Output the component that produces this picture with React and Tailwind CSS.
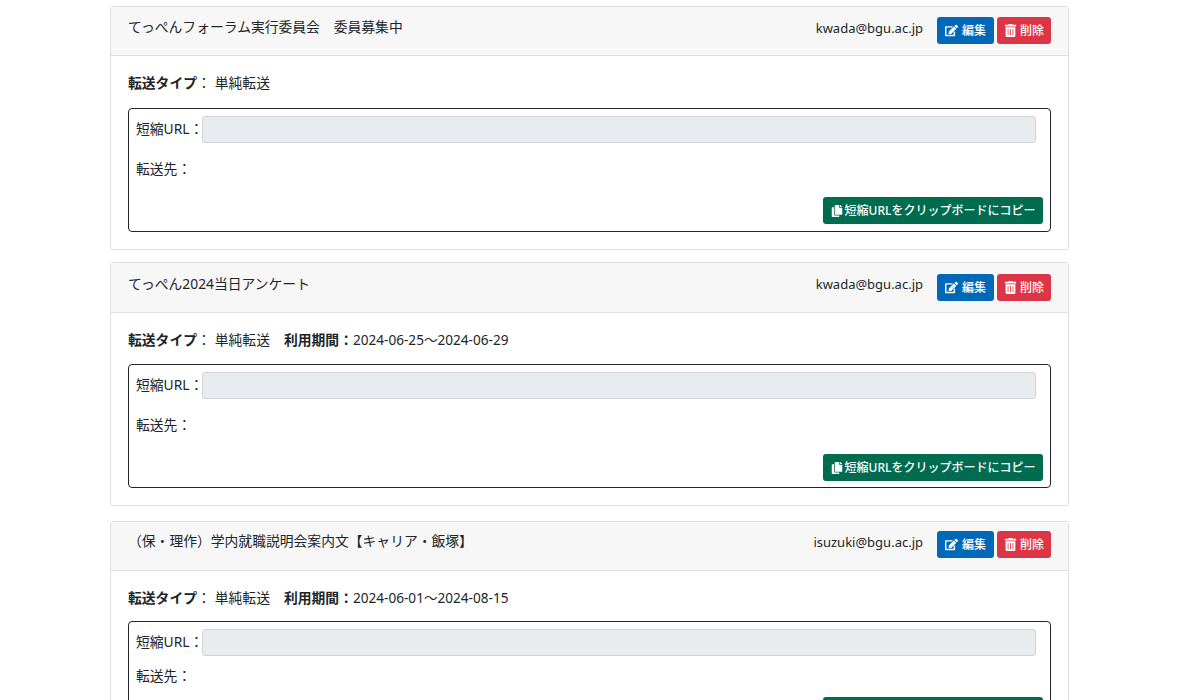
import React from "react";
import { FaEdit, FaTrashAlt, FaCopy } from "react-icons/fa";

const cards = [
  {
    title: "てっぺんフォーラム実行委員会　委員募集中",
    email: "kwada@bgu.ac.jp",
    period: null,
    headerH: "h-[49px]",
    titlePt: "pt-[10px]",
    emailPt: "pt-[11px]",
    btnMt: "mt-[10px]",
    typeH: "h-[52px] pt-[3px]",
    destH: "h-[54px] pb-[2px]",
    boxPb: "pb-[7px]",
    mb: "mb-[12px]",
  },
  {
    title: "てっぺん2024当日アンケート",
    email: "kwada@bgu.ac.jp",
    period: "2024-06-25～2024-06-29",
    headerH: "h-[50px]",
    titlePt: "pt-[11px]",
    emailPt: "pt-[11px]",
    btnMt: "mt-[11px]",
    typeH: "h-[51px] pt-[3px]",
    destH: "h-[55px] pb-[3px]",
    boxPb: "pb-[6px]",
    mb: "mb-[15px]",
  },
  {
    title: "（保・理作）学内就職説明会案内文【キャリア・飯塚】",
    email: "isuzuki@bgu.ac.jp",
    period: "2024-06-01～2024-08-15",
    headerH: "h-[49px]",
    titlePt: "pt-[9px]",
    emailPt: "pt-[10px]",
    btnMt: "mt-[9px]",
    typeH: "h-[50px] pt-[5px]",
    destH: "h-[41px]",
    boxPb: "pb-[7px]",
    mb: "mb-0",
  },
];

function LinkCard({ card }) {
  return (
    <div className={`rounded-[3px] border border-[#dfdfdf] bg-white ${card.mb}`}>
      {/* Header */}
      <div className={`flex items-start justify-between border-b border-[#dfdfdf] bg-[#f7f7f7] pl-[17px] pr-[17px] ${card.headerH}`}>
        <div className={`leading-[20px] ${card.titlePt}`}>{card.title}</div>
        <div className="flex items-start">
          <span className={`mr-[14px] text-[13px] leading-[20px] ${card.emailPt}`}>{card.email}</span>
          <button className={`flex h-[27px] w-[57px] items-center justify-center gap-[4px] rounded-[3px] bg-[#0068b7] text-[12px] font-medium text-white ${card.btnMt}`}>
            <FaEdit className="text-[13px]" />
            編集
          </button>
          <button className={`ml-[3px] flex h-[27px] w-[54px] items-center justify-center gap-[3px] rounded-[3px] bg-[#dc3545] text-[12px] font-medium text-white ${card.btnMt}`}>
            <FaTrashAlt className="text-[13px]" />
            削除
          </button>
        </div>
      </div>

      {/* Body */}
      <div className="px-[17px] pb-[17px]">
        <div className={`flex items-center whitespace-nowrap ${card.typeH}`}>
          <b className="font-bold">転送タイプ</b>
          <span>：</span>
          <span className="ml-[4px]">単純転送</span>
          {card.period && (
            <>
              <b className="ml-[14px] font-bold">利用期間：</b>
              <span className="text-[13.6px]">{card.period}</span>
            </>
          )}
        </div>

        <div className={`rounded-[4px] border border-[#212529] px-[7px] pt-[7px] ${card.boxPb}`}>
          <div className="flex items-center pr-[7px]">
            <span className="w-[66px] shrink-0 whitespace-nowrap">短縮URL：</span>
            <div className="h-[27px] flex-1 rounded-[3px] border border-[#ced4da] bg-[#e9ecef]" />
          </div>
          <div className={`flex items-center ${card.destH}`}>転送先：</div>
          <div className="flex justify-end">
            <button className="flex h-[27px] w-[220px] items-center justify-center gap-[2px] whitespace-nowrap rounded-[3px] bg-[#006c4f] text-[12px] font-medium text-white">
              <FaCopy className="text-[12px]" />
              短縮URLをクリップボードにコピー
            </button>
          </div>
        </div>
      </div>
    </div>
  );
}

export default function App() {
  return (
    <div
      className="h-[700px] overflow-hidden bg-white pl-[110px] pr-[111px] pt-[6px] text-[13.8px] text-[#212529]"
      style={{ fontFamily: '"Noto Sans", "Noto Sans CJK JP", sans-serif' }}
    >
      {cards.map((card) => (
        <LinkCard key={card.title} card={card} />
      ))}
    </div>
  );
}
